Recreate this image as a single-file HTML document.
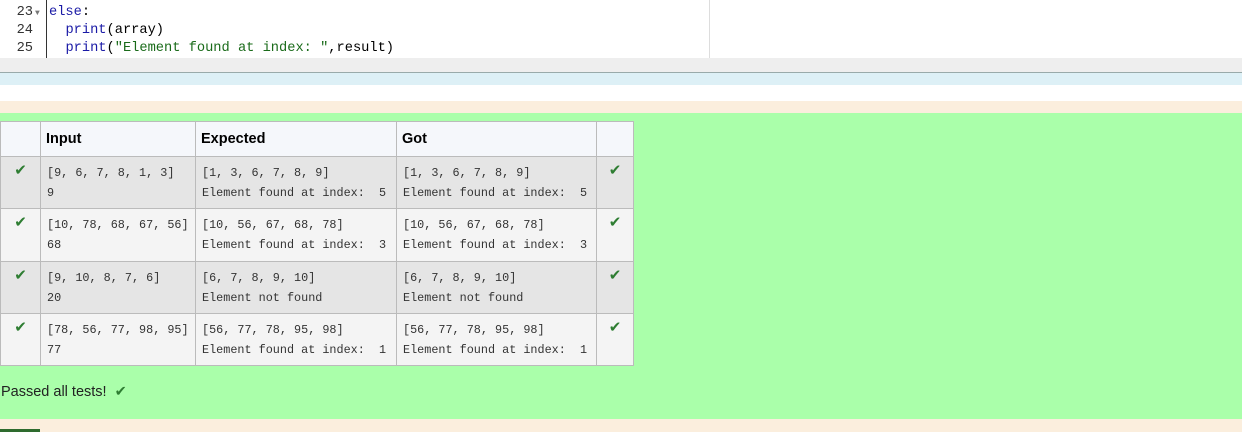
<!DOCTYPE html>
<html><head><style>
body{margin:0;width:1242px;height:432px;overflow:hidden;background:#fff;font-family:"Liberation Sans",sans-serif;position:relative}
.abs{position:absolute}
.code{font-family:"Liberation Mono",monospace;font-size:13.7px;line-height:18px}
table{border-collapse:collapse;position:absolute;left:0;top:121px;table-layout:fixed;width:634px}
td,th{border:1px solid #bbb;vertical-align:top;padding:0;overflow:hidden}
th{background:#f5f7fb;text-align:left;font-size:14.5px;font-weight:bold;height:34px;padding-left:5px;vertical-align:middle}
td.m{font-family:"Liberation Mono",monospace;font-size:11.8px;line-height:20px;color:#333;padding:6px 0 0 6px;white-space:pre}
tr.g td{background:#e5e5e5}
tr.w td{background:#f4f4f4}
td.k{text-align:center;color:#2e7d32;font-size:15px;padding-top:4px}
</style></head><body>
<div class="abs code" style="left:0;top:-14px;width:709px;height:72px;border-right:1px solid #ddd">
<div style="position:absolute;left:46px;top:0;width:1px;height:72px;background:#333"></div>
<div style="position:absolute;left:0;top:18px;width:33px;text-align:right;color:#333">23<br>24<br>25</div>
<div style="position:absolute;left:35px;top:19px;font-size:8px;color:#777">▼</div>
<div style="position:absolute;left:49px;top:18px;white-space:pre"><span style="color:#1a1aa6">else</span>:
  <span style="color:#1a1aa6">print</span>(array)
  <span style="color:#1a1aa6">print</span>(<span style="color:#1a6b1a">"Element found at index: "</span>,result)</div>
</div>
<div class="abs" style="left:0;top:58px;width:1242px;height:14px;background:#eee"></div>
<div class="abs" style="left:0;top:72px;width:1242px;height:1px;background:#9aa"></div>
<div class="abs" style="left:0;top:73px;width:1242px;height:12px;background:#ddf0f6"></div>
<div class="abs" style="left:0;top:101px;width:1242px;height:12px;background:#fbeedd"></div>
<div class="abs" style="left:0;top:113px;width:1242px;height:306px;background:#aaffaa"></div>
<div class="abs" style="left:0;top:419px;width:1242px;height:13px;background:#fbeedd"></div>
<div class="abs" style="left:0;top:429px;width:40px;height:3px;background:#2e6b2e"></div>
<table>
<colgroup><col style="width:40px"><col style="width:155px"><col style="width:201px"><col style="width:200px"><col style="width:37px"></colgroup>
<tr><th></th><th>Input</th><th>Expected</th><th>Got</th><th></th></tr>
<tr class="g" style="height:52px"><td class="k">✔</td><td class="m">[9, 6, 7, 8, 1, 3]
9</td><td class="m">[1, 3, 6, 7, 8, 9]
Element found at index:  5</td><td class="m">[1, 3, 6, 7, 8, 9]
Element found at index:  5</td><td class="k">✔</td></tr>
<tr class="w" style="height:53px"><td class="k">✔</td><td class="m">[10, 78, 68, 67, 56]
68</td><td class="m">[10, 56, 67, 68, 78]
Element found at index:  3</td><td class="m">[10, 56, 67, 68, 78]
Element found at index:  3</td><td class="k">✔</td></tr>
<tr class="g" style="height:52px"><td class="k">✔</td><td class="m">[9, 10, 8, 7, 6]
20</td><td class="m">[6, 7, 8, 9, 10]
Element not found</td><td class="m">[6, 7, 8, 9, 10]
Element not found</td><td class="k">✔</td></tr>
<tr class="w" style="height:52px"><td class="k">✔</td><td class="m">[78, 56, 77, 98, 95]
77</td><td class="m">[56, 77, 78, 95, 98]
Element found at index:  1</td><td class="m">[56, 77, 78, 95, 98]
Element found at index:  1</td><td class="k">✔</td></tr>
</table>
<div class="abs" style="left:1px;top:384px;font-size:14.5px;color:#222">Passed all tests! <span style="color:#2e7d32;margin-left:4px">✔</span></div>
</body></html>
